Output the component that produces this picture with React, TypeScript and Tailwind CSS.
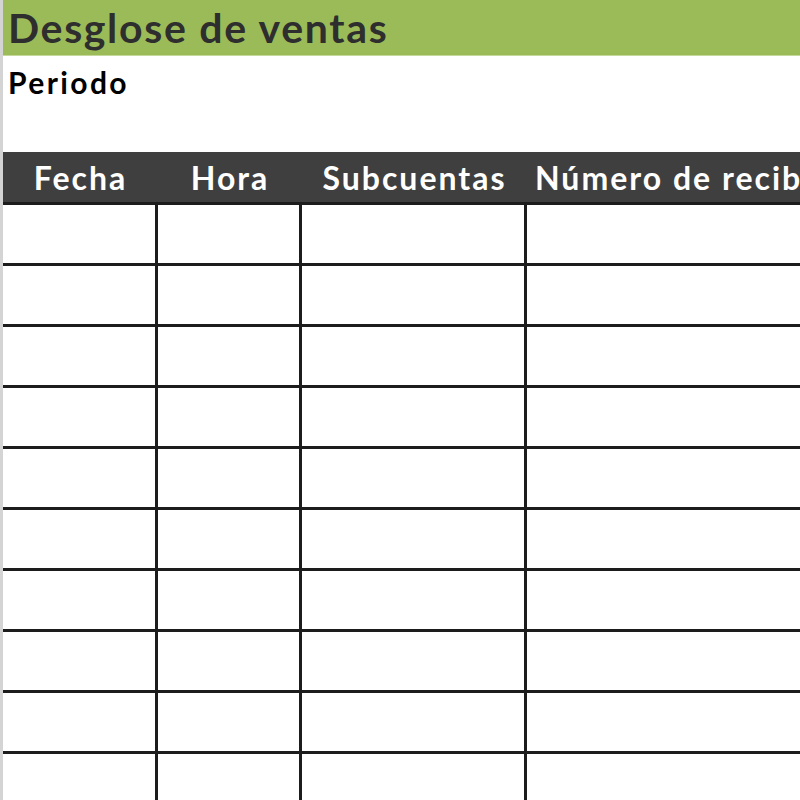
import React from "react";

const cols = [
  { w: "w-[155px]", label: "Fecha", align: "justify-center" },
  { w: "w-[144px]", label: "Hora", align: "justify-center" },
  { w: "w-[225px]", label: "Subcuentas", align: "justify-center" },
  { w: "flex-1", label: "Número de recibo", align: "justify-start pl-[8px]" },
];

export default function App() {
  const rows = Array.from({ length: 10 });
  return (
    <div
      className="w-[800px] h-[800px] overflow-hidden bg-white flex"
      style={{ fontFamily: "Lato, 'Open Sans', sans-serif" }}
    >
      <div className="w-[3px] shrink-0 bg-[#d4d4d4]" />
      <div className="flex-1 flex flex-col min-w-0">
        <div className="h-[56px] shrink-0 bg-[#9bbb59] border-b border-[#c4d89c] flex items-center pl-[5px]">
          <span className="text-[41px] font-bold text-[#2e2e2e] leading-none whitespace-nowrap tracking-[1.7px]">
            Desglose de ventas
          </span>
        </div>
        <div className="h-[96px] shrink-0 pl-[5px] pt-[11px]">
          <span className="text-[30px] font-bold text-black leading-none whitespace-nowrap tracking-[2.4px]">
            Periodo
          </span>
        </div>
        <div className="h-[53px] shrink-0 bg-[#3f3f3f] border-b-[3px] border-[#1c1c1c] flex">
          {cols.map((c) => (
            <div
              key={c.label}
              className={`${c.w} shrink-0 flex items-center ${c.align} pt-[2px]`}
            >
              <span className="text-[32px] font-bold text-white leading-none whitespace-nowrap tracking-[2px]">
                {c.label}
              </span>
            </div>
          ))}
        </div>
        {rows.map((_, i) => (
          <div key={i} className="h-[61px] shrink-0 flex border-b-[3px] border-[#1c1c1c]">
            <div className="w-[155px] shrink-0 border-r-[3px] border-[#1c1c1c]" />
            <div className="w-[144px] shrink-0 border-r-[3px] border-[#1c1c1c]" />
            <div className="w-[225px] shrink-0 border-r-[3px] border-[#1c1c1c]" />
            <div className="flex-1" />
          </div>
        ))}
      </div>
    </div>
  );
}
